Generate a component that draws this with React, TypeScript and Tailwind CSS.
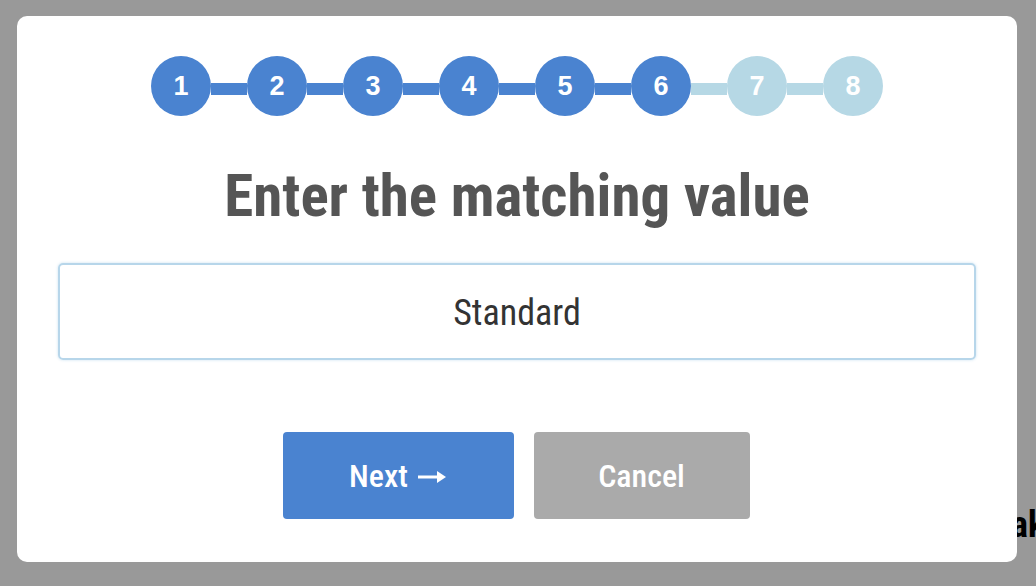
import React from "react";

const steps = [1, 2, 3, 4, 5, 6, 7, 8];
const active = 6;

function Stepper() {
  return (
    <div className="flex items-center">
      {steps.map((n, i) => {
        const done = n <= active;
        return (
          <React.Fragment key={n}>
            {i > 0 && (
              <div
                className={
                  "w-[36px] h-[12px] mt-[6px] " +
                  (n <= active ? "bg-[#4a83d0]" : "bg-[#b6d8e5]")
                }
              />
            )}
            <div
              className={
                "relative z-10 w-[60px] h-[60px] rounded-full flex items-center justify-center text-white font-bold text-[27px] leading-none font-['Liberation_Sans',Arial,sans-serif] " +
                (done ? "bg-[#4a83d0]" : "bg-[#b6d8e5]")
              }
            >
              {n}
            </div>
          </React.Fragment>
        );
      })}
    </div>
  );
}

function Arrow() {
  return (
    <svg width="30" height="16" viewBox="0 0 30 16" className="ml-[9px] mt-[2px]">
      <path d="M1 8 H26" stroke="white" strokeWidth="3" />
      <path d="M20 2 L29 8 L20 14 Z" fill="white" />
    </svg>
  );
}

export default function App() {
  return (
    <div className="relative w-[1036px] h-[586px] overflow-hidden bg-white font-['Roboto_Condensed',Roboto,sans-serif] [font-stretch:condensed]">
      <div className="absolute left-[1011px] top-[507px] text-[36px] font-bold leading-none text-black">
        ak
      </div>
      <div className="absolute inset-0 bg-black/40 pt-[16px] pl-[17px]">
        <div className="w-[1000px] h-[546px] rounded-[10px] bg-white flex flex-col items-center pt-[40px] px-[41px]">
          <Stepper />
          <h1 className="mt-[50px] text-[59px] leading-none font-bold text-[#555555]">
            Enter the matching value
          </h1>
          <div className="mt-[38px] w-full h-[97px] rounded-[5px] border-2 border-[#b7d6ea] shadow-[0_0_3px_rgba(120,180,220,0.4)] flex items-center justify-center pt-[3px] text-[36px] text-[#333333] leading-none">
            Standard
          </div>
          <div className="mt-[72px] -ml-[2px] flex gap-[20px]">
            <button className="w-[231px] h-[87px] rounded-[4px] bg-[#4a83d0] text-white text-[32px] font-medium leading-none flex items-center justify-center">
              Next
              <Arrow />
            </button>
            <button className="w-[216px] h-[87px] rounded-[4px] bg-[#aaaaaa] text-white text-[32px] font-medium leading-none flex items-center justify-center">
              Cancel
            </button>
          </div>
        </div>
      </div>
    </div>
  );
}
